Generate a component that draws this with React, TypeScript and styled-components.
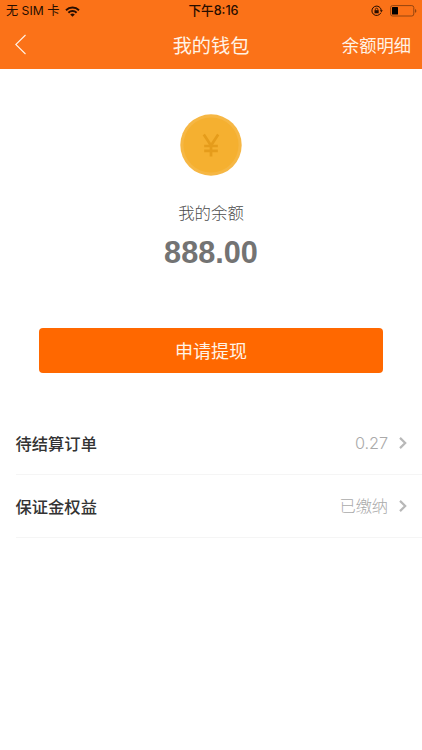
import React from 'react';
import styled, { createGlobalStyle } from 'styled-components';

const GlobalStyle = createGlobalStyle`
  * { box-sizing: border-box; }
  body {
    margin: 0;
    background: #fff;
    font-family: "Liberation Sans", "Noto Sans CJK SC", sans-serif;
  }
  button { font-family: inherit; border: 0; padding: 0; background: none; }
`;

const Screen = styled.div`
  display: flex;
  flex-direction: column;
  height: 750px;
  overflow: hidden;
`;

const Header = styled.header`
  height: 68.5px;
  flex-shrink: 0;
  background: #fb7218;
`;

const StatusBar = styled.div`
  display: grid;
  grid-template-columns: 1fr auto 1fr;
  align-items: center;
  height: 22px;
  padding: 0 5px 0 6px;
  font: 400 12.2px/22px "Inter", "Noto Sans CJK SC", sans-serif;
  color: #260d00;
`;

const StatusGroup = styled.div<{ $end?: boolean }>`
  display: flex;
  align-items: center;
  justify-content: ${p => (p.$end ? 'flex-end' : 'flex-start')};
  gap: ${p => (p.$end ? 7 : 6)}px;
  white-space: nowrap;
`;

const Clock = styled.div`
  padding-left: 4px;
  font-weight: 500;
  font-size: 12.6px;
`;

const NavBar = styled.div`
  display: grid;
  grid-template-columns: 1fr auto 1fr;
  align-items: center;
  height: 45px;
  padding: 0 11px 0 14px;
`;

const BackButton = styled.button`
  justify-self: start;
  display: flex;
`;

const Title = styled.h1`
  margin: 0 3px 0 0;
  font: 400 19.2px/44px "Noto Sans CJK SC", sans-serif;
  color: #fff3e6;
`;

const NavAction = styled.button`
  justify-self: end;
  font: 400 17.3px/46px "Noto Sans CJK SC", sans-serif;
  color: #fff3e6;
`;

const Balance = styled.section`
  display: flex;
  flex-direction: column;
  align-items: center;
  padding-top: 45px;
`;

const BalanceLabel = styled.div`
  margin-top: 24px;
  font: 300 16.4px/24px "Noto Sans CJK SC", sans-serif;
  color: #4c4c4c;
`;

const Amount = styled.div`
  margin-top: 9px;
  font-size: 30.7px;
  line-height: 40px;
  font-weight: 700;
  color: #737373;
`;

const WithdrawButton = styled.button`
  height: 45px;
  flex-shrink: 0;
  margin: 55.5px 39px 0;
  border-radius: 4px;
  background: #ff6800;
  font: 400 18px/45px "Noto Sans CJK SC", sans-serif;
  color: #fff3e6;
`;

const List = styled.div`
  margin: 38.5px 0 0 15.5px;
`;

const Row = styled.div`
  display: flex;
  align-items: center;
  height: 63px;
  padding-right: 15px;
  border-bottom: 1px solid #f5f5f5;
`;

const RowLabel = styled.span`
  flex: 1;
  font: 500 16.3px/24px "Noto Sans CJK SC", sans-serif;
  color: #333;
`;

const RowValue = styled.span`
  margin-right: 11px;
  font: 300 16.3px/24px "Inter", "Noto Sans CJK SC", sans-serif;
  letter-spacing: -0.1px;
  color: #aaa;
`;

const WifiIcon = () => (
  <svg width="15" height="11" viewBox="0 0 15 11" fill="none" stroke="#260d00" strokeWidth="1.9">
    <path d="M1 4.2a9.3 9.3 0 0 1 13 0" />
    <path d="M3.4 6.7a5.9 5.9 0 0 1 8.2 0" />
    <path d="M7.5 10.8 5.2 8.5a3.3 3.3 0 0 1 4.6 0z" fill="#260d00" stroke="none" />
  </svg>
);

const RotationLockIcon = () => (
  <svg width="12" height="12" viewBox="0 0 12 12" fill="none" stroke="#260d00">
    <path d="M9.9 7.7A4.7 4.7 0 1 1 10.3 5.5" strokeWidth="1" />
    <path d="M8.8 5.2h3l-1.5 2z" fill="#260d00" stroke="none" />
    <rect x="3.5" y="5.2" width="4.2" height="3.1" fill="#260d00" stroke="none" />
    <path d="M4.4 5.4V4.4a1.2 1.2 0 0 1 2.4 0v1" strokeWidth=".8" />
  </svg>
);

const BatteryIcon = () => (
  <svg width="27" height="12" viewBox="0 0 27 12">
    <rect x=".6" y=".6" width="23.2" height="10.4" rx="2" fill="none" stroke="#94440f" strokeWidth="1" />
    <rect x="2" y="2" width="6" height="7.6" rx=".5" fill="#000" />
    <path d="M25 4v3.8q1.4-.6 1.4-1.9T25 4z" fill="#94440f" />
  </svg>
);

const BackIcon = () => (
  <svg width="13" height="22" viewBox="0 0 13 22" fill="none" stroke="#fff3e6" strokeWidth="1.1">
    <path d="M11.5 1 1.8 10.5l9.7 9.5" />
  </svg>
);

const CoinIcon = () => (
  <svg width="62" height="62" viewBox="0 0 62 62">
    <circle cx="31" cy="31" r="30.7" fill="#f6b744" />
    <circle cx="31" cy="31" r="27.6" fill="#f5b030" />
    <path
      d="M23.8 20.5 31 31.5l7.2-11M31 31v11.5M24.2 32h13.6M24.2 36.8h13.6"
      fill="none"
      stroke="#e59c1b"
      strokeWidth="2.7"
    />
  </svg>
);

const ChevronIcon = () => (
  <svg width="8" height="12" viewBox="0 0 8 12" fill="none" stroke="#b8b8b8" strokeWidth="2.2">
    <path d="m1 .9 5.2 5.1L1 11.1" />
  </svg>
);

const rows = [
  { label: '待结算订单', value: '0.27' },
  { label: '保证金权益', value: '已缴纳' },
];

export default function App() {
  return (
    <Screen>
      <GlobalStyle />
      <Header>
        <StatusBar>
          <StatusGroup>
            <span>无 SIM 卡</span>
            <WifiIcon />
          </StatusGroup>
          <Clock>下午8:16</Clock>
          <StatusGroup $end>
            <RotationLockIcon />
            <BatteryIcon />
          </StatusGroup>
        </StatusBar>
        <NavBar>
          <BackButton aria-label="返回">
            <BackIcon />
          </BackButton>
          <Title>我的钱包</Title>
          <NavAction>余额明细</NavAction>
        </NavBar>
      </Header>
      <Balance>
        <CoinIcon />
        <BalanceLabel>我的余额</BalanceLabel>
        <Amount>888.00</Amount>
      </Balance>
      <WithdrawButton>申请提现</WithdrawButton>
      <List>
        {rows.map(row => (
          <Row key={row.label}>
            <RowLabel>{row.label}</RowLabel>
            <RowValue>{row.value}</RowValue>
            <ChevronIcon />
          </Row>
        ))}
      </List>
    </Screen>
  );
}
